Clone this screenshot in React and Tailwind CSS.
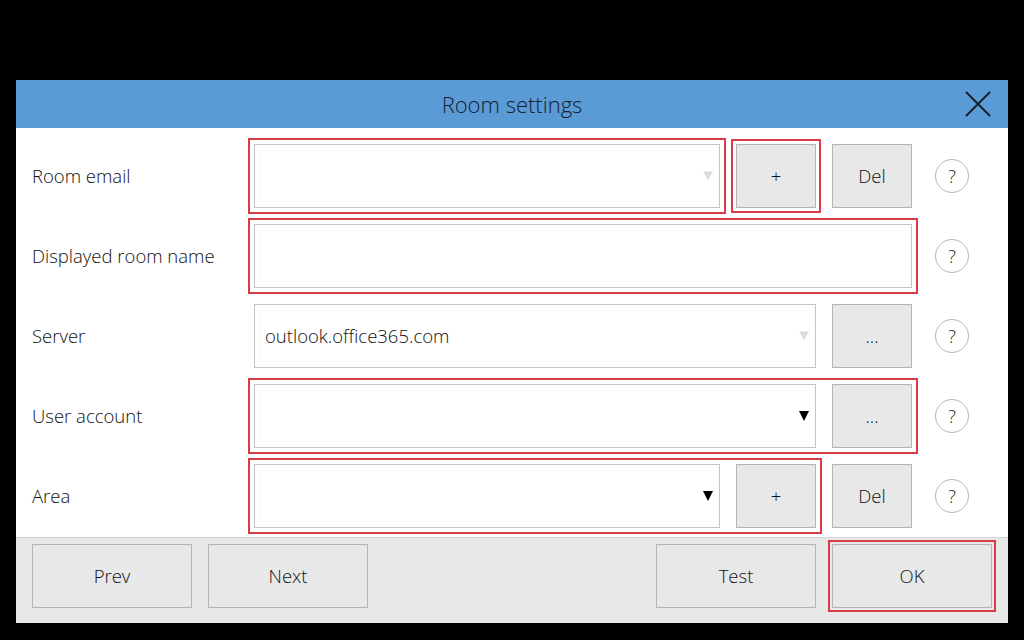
import React from 'react';

const font = { fontFamily: '"Open Sans", "Noto Sans", "Liberation Sans", sans-serif' };

function Field({ width, value, arrow }) {
  return (
    <div className={`relative h-16 shrink-0 border border-[#c4c4c4] bg-white ${width}`}>
      <div className="absolute inset-[5px] border border-[#f6f6f6]" />
      {value && (
        <span className="absolute left-[10px] top-1/2 -translate-y-1/2 text-[18.5px] text-[#111]">{value}</span>
      )}
      {arrow === 'faint' && (
        <span className="absolute right-[6px] top-1/2 -translate-y-1/2 h-0 w-0 border-x-[5px] border-t-[9px] border-x-transparent border-t-[#dcdcdc]" />
      )}
      {arrow === 'dark' && (
        <span className="absolute right-[6px] top-1/2 -translate-y-1/2 h-0 w-0 border-x-[5px] border-t-[10px] border-x-transparent border-t-black" />
      )}
    </div>
  );
}

function Btn({ children, className = '' }) {
  return (
    <div className={`flex h-16 w-20 shrink-0 items-center justify-center border border-[#b4b4b4] bg-[#e8e8e8] text-[18.5px] text-[#111] ${className}`}>
      {children}
    </div>
  );
}

function Red({ children, className = '' }) {
  return <div className={`flex shrink-0 items-center border-2 border-[#dc3c46] ${className}`}>{children}</div>;
}

function Help() {
  return (
    <div className="flex h-[34px] w-[34px] shrink-0 items-center justify-center rounded-full border border-[#b8b8b8] bg-white text-[18px] text-[#222]">
      ?
    </div>
  );
}

function Row({ label, children }) {
  return (
    <div className="flex h-20 items-center">
      <div className="w-[216px] shrink-0 text-[18.5px] text-[#111]">{label}</div>
      <div className="flex w-[687px] shrink-0 items-center">{children}</div>
      <Help />
    </div>
  );
}

export default function App() {
  return (
    <div className="h-[640px] w-[1024px] bg-black pt-20 font-light" style={font}>
      <div className="ml-4 w-[992px] bg-white">
        {/* Header */}
        <div className="relative flex h-12 items-center justify-center bg-[#5b9bd5]">
          <span className="text-[22px] text-[#14202e]">Room settings</span>
          <svg className="absolute right-[17px] top-[11px]" width="26" height="26" viewBox="0 0 26 26">
            <path d="M1 1 L25 25 M25 1 L1 25" stroke="#14202e" strokeWidth="2" fill="none" />
          </svg>
        </div>

        {/* Body */}
        <div className="px-4 pt-2 pb-px">
          <Row label="Room email">
            <Red className="p-1">
              <Field width="w-[466px]" arrow="faint" />
            </Red>
            <Red className="ml-[5px] p-[3px]">
              <Btn>+</Btn>
            </Red>
            <Btn className="ml-[11px]">Del</Btn>
          </Row>
          <Row label="Displayed room name">
            <Red className="p-1">
              <Field width="w-[658px]" />
            </Red>
          </Row>
          <Row label="Server">
            <div className="flex items-center pl-[6px]">
              <Field width="w-[562px]" value="outlook.office365.com" arrow="faint" />
              <Btn className="ml-4">...</Btn>
            </div>
          </Row>
          <Row label="User account">
            <Red className="p-1">
              <Field width="w-[562px]" arrow="dark" />
              <Btn className="ml-4">...</Btn>
            </Red>
          </Row>
          <Row label="Area">
            <Red className="p-1">
              <Field width="w-[466px]" arrow="dark" />
              <Btn className="ml-4">+</Btn>
            </Red>
            <Btn className="ml-[10px]">Del</Btn>
          </Row>
        </div>

        {/* Footer */}
        <div className="flex items-center border-t border-[#d2d2d2] bg-[#e8e8e8] pt-[2px] pb-[11px] pl-4 pr-3">
          <Btn className="w-40">Prev</Btn>
          <Btn className="ml-4 w-40">Next</Btn>
          <div className="flex-1" />
          <Btn className="w-40">Test</Btn>
          <Red className="ml-3 p-[2px]">
            <Btn className="w-40">OK</Btn>
          </Red>
        </div>
      </div>
    </div>
  );
}
